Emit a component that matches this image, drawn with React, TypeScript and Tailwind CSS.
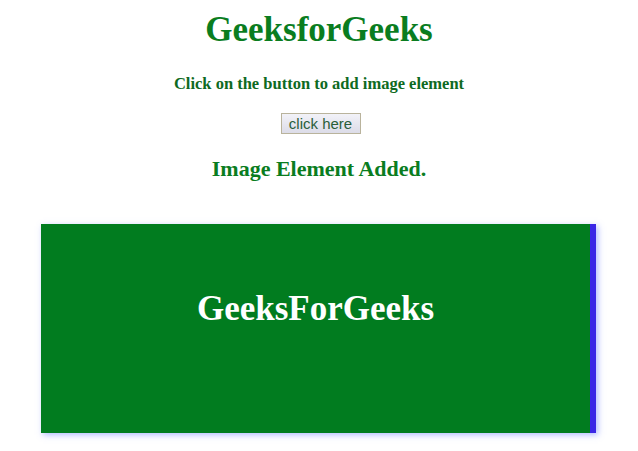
import React from 'react';

const App = () => {
  return (
    <div className="min-h-[451px] bg-white text-center" style={{ fontFamily: '"Liberation Serif", serif' }}>
      <h1 className="pt-[10px] text-[35px] font-bold leading-[40px] text-[#0a7d1f]">GeeksforGeeks</h1>
      <p className="mt-[24px] text-[16.5px] font-bold leading-[19px] text-[#0e6a22]">
        Click on the button to add image element
      </p>
      <button
        className="mt-[20px] ml-[3px] h-[21px] w-[80px] border border-[#b9b39c] bg-gradient-to-b from-[#f2f2f8] to-[#dcdce8] text-[15px] leading-[17px] text-[#2a5e3a]"
        style={{ fontFamily: '"Liberation Sans", Arial, sans-serif' }}
      >
        click here
      </button>
      <p className="mt-[20px] text-[22px] font-bold leading-[26px] text-[#0a7d1f]">Image Element Added.</p>
      <div className="mt-[42px] ml-[41px] flex h-[209px] w-[555px] justify-center border-r-[6px] border-[#3a26e6] bg-[#017c1f] pt-[65px] shadow-[2px_2px_6px_rgba(100,120,255,0.5)]">
        <span className="text-[35px] font-bold leading-[40px] text-white">GeeksForGeeks</span>
      </div>
    </div>
  );
};

export default App;
